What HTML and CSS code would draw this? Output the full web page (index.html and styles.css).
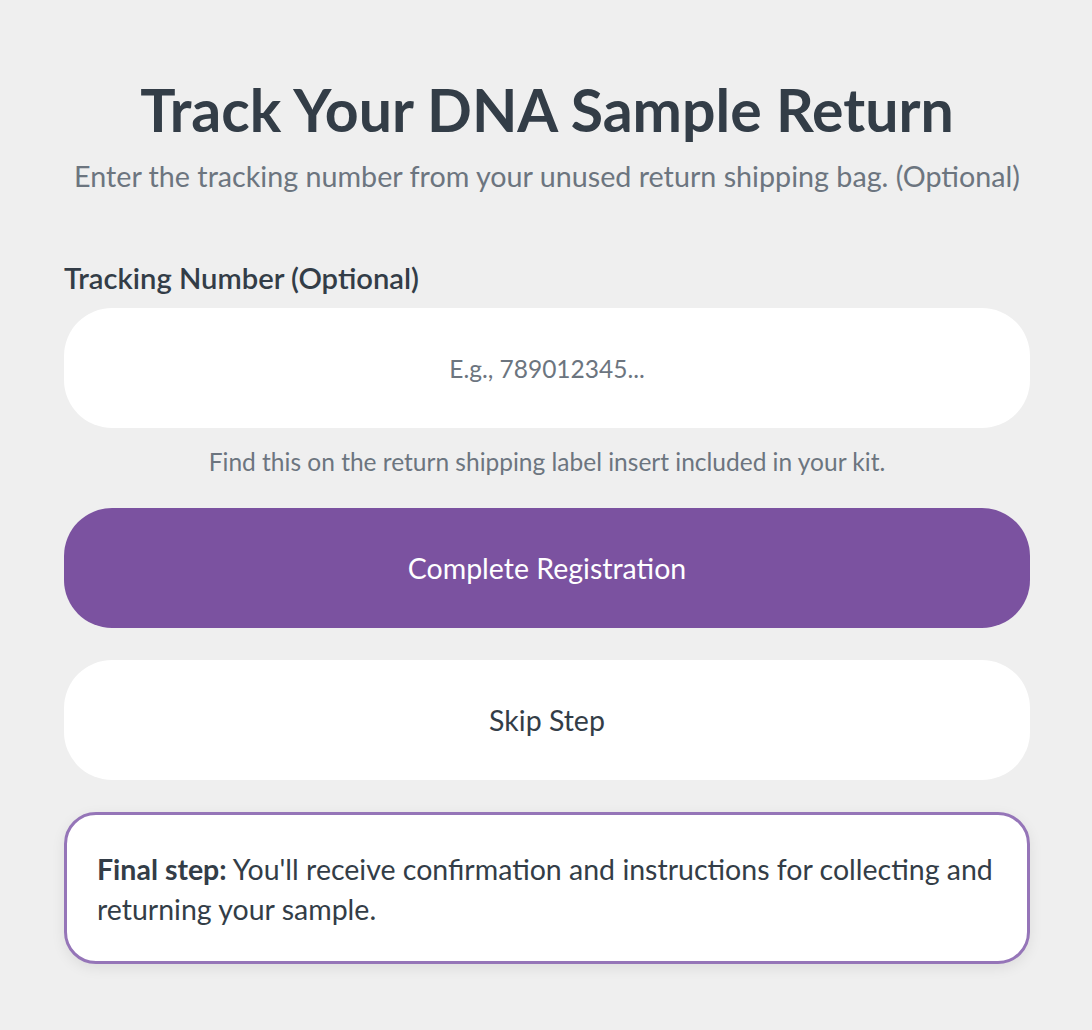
FILE: index.html
```html
<!DOCTYPE html>
<html lang="en">
<head>
  <meta charset="UTF-8" />
  <meta name="viewport" content="width=device-width, initial-scale=1.0" />
  <title>Track Your DNA Sample Return</title>
  <link rel="stylesheet" href="styles.css">
</head>
<body>
  <main class="page">
    <h1>Track Your DNA Sample Return</h1>
    <p class="subtitle">Enter the tracking number from your unused return shipping bag. (Optional)</p>

    <form class="track-form" onsubmit="return false;">
      <label for="tracking" class="field-label">Tracking Number (Optional)</label>
      <input type="text" id="tracking" class="field-input" placeholder="E.g., 789012345...">
      <p class="field-help">Find this on the return shipping label insert included in your kit.</p>

      <button type="submit" class="btn btn-primary">Complete Registration</button>
      <button type="button" class="btn btn-secondary">Skip Step</button>
    </form>

    <div class="note">
      <p><strong>Final step:</strong> You'll receive confirmation and instructions for collecting and returning your sample.</p>
    </div>
  </main>
</body>
</html>
```

FILE: styles.css
```css
body {
  margin: 0;
  background-color: #efefef;
  color: #333d47;
  font-family: Lato, 'Noto Sans', sans-serif;
}

.page {
  padding: 75px 62px 40px 64px;
}

h1 {
  font-size: 59px;
  line-height: 70px;
  font-weight: 700;
  text-align: center;
  margin: 0 0 11px;
  color: #333d47;
}

.subtitle {
  font-size: 28.7px;
  line-height: 40px;
  text-align: center;
  color: #6c757f;
  margin: 0 0 62px;
}

.track-form {
  display: flex;
  flex-direction: column;
}

.field-label {
  font-size: 29.2px;
  line-height: 40px;
  font-weight: 600;
  margin-bottom: 10px;
}

.field-input {
  height: 120px;
  box-sizing: border-box;
  border: none;
  border-radius: 48px;
  background: #fff;
  font-family: inherit;
  font-size: 24.5px;
  text-align: center;
  color: #333d47;
  outline: none;
}

.field-input::placeholder {
  color: #6c757f;
}

.field-help {
  font-size: 24.5px;
  line-height: 34px;
  text-align: center;
  color: #6c757f;
  margin: 17px 0 29px;
}

.btn {
  height: 120px;
  border: none;
  border-radius: 48px;
  font-family: inherit;
  font-size: 28.5px;
  cursor: pointer;
}

.btn-primary {
  background: #7b52a0;
  color: #fff;
  margin-bottom: 32px;
}

.btn-secondary {
  background: #fff;
  color: #333d47;
  margin-bottom: 32px;
}

.note {
  background: #fff;
  border: 3px solid #9575b8;
  border-radius: 32px;
  padding: 34px 20px 32px 30px;
  box-shadow: 0 4px 14px rgba(0, 0, 0, 0.08);
}

.note p {
  margin: 0;
  font-size: 28.5px;
  line-height: 40px;
}
```
